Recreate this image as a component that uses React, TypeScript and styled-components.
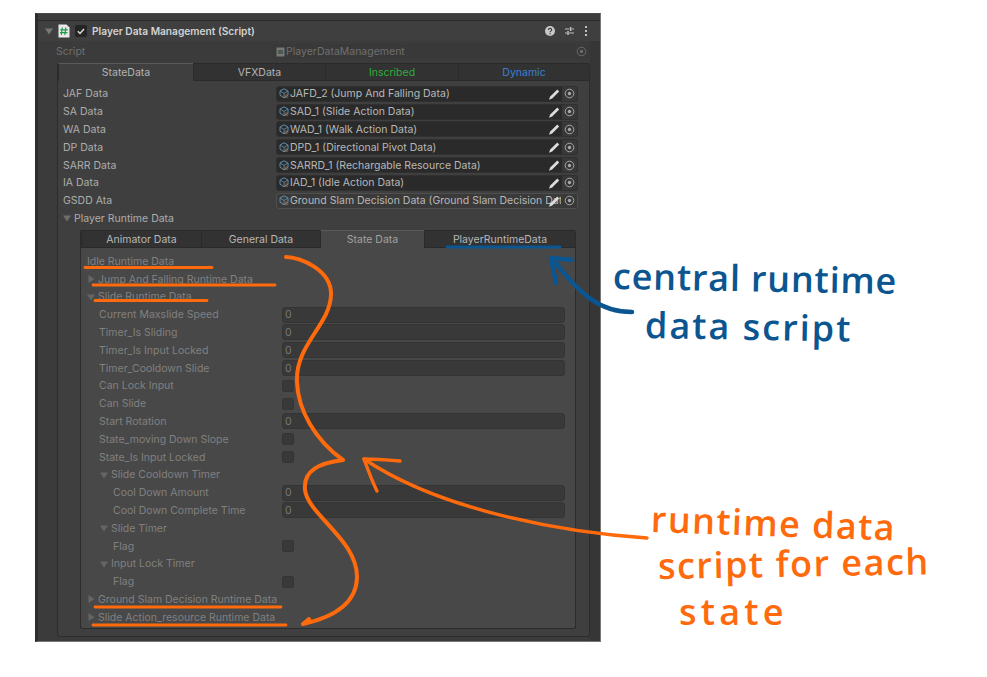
import React from "react";
import styled, { createGlobalStyle } from "styled-components";

const Global = createGlobalStyle`
  html, body { margin: 0; padding: 0; background: #fff; }
  body { font-family: Inter, "Liberation Sans", sans-serif; font-size: 10.5px; }
  #root { width: 987px; height: 677px; position: relative; overflow: hidden; }
`;

const Panel = styled.div`
  box-sizing: border-box;
  width: 566px;
  height: 629px;
  margin: 13px 0 0 35px;
  background: #3e3e3e;
  border-left: 3px solid #2d2d2d;
  border-top: 1px solid #4a4a4a;
  border-right: 1px solid #777;
  border-bottom: 1px solid #777;
  display: flex;
  flex-direction: column;
`;

const HeaderBar = styled.div`
  height: 20px;
  margin-top: 6px;
  border-top: 1px solid #2b2b2b;
  display: flex;
  align-items: center;
  padding: 0 12px 0 7px;
  gap: 5px;
  background: #3f3f3f;
`;

const HeaderTitle = styled.span`
  color: #d2d2d2;
  font-weight: 600;
  font-size: 10.2px;
  flex: 1;
`;

const HeaderIcons = styled.div`
  display: flex;
  align-items: center;
  gap: 10px;
`;

const Body = styled.div`
  flex: 1;
  display: flex;
  background: #3b3b3b;
  padding: 2px 0 4px 19px;
  min-height: 0;
  box-shadow: inset -10px 0 0 #363636;
`;

const BodyInner = styled.div`
  width: 533px;
  display: flex;
  flex-direction: column;
`;

const ScriptRow = styled.div`
  height: 17px;
  margin-bottom: 3px;
  display: flex;
  align-items: center;
  color: #6f6f6f;
`;

const ScriptLabel = styled.span`
  width: 215px;
  margin-left: -1px;
  padding-right: 1px;
`;

const ScriptField = styled.div`
  width: 318px;
  height: 15px;
  box-sizing: border-box;
  background: #393939;
  border-radius: 3px;
  display: flex;
  align-items: center;
  padding: 0 3px 0 4px;
  gap: 1px;
  color: #6f6f6f;
`;

const Grow = styled.span`
  flex: 1;
  white-space: nowrap;
  overflow: hidden;
`;

const TabGroup = styled.div<{ $inner?: boolean }>`
  flex: 1;
  min-height: 0;
  box-sizing: border-box;
  background: ${(p) => (p.$inner ? "#484848" : "#3f3f3f")};
  border: 1px solid #2c2c2c;
  border-top: none;
  border-radius: 3px;
  display: flex;
  flex-direction: column;
`;

const TabBar = styled.div<{ $cols: string }>`
  display: grid;
  grid-template-columns: ${(p) => p.$cols};
  height: 18px;
  flex: none;
`;

const Tab = styled.div<{ $active?: boolean; $bg: string; $color?: string }>`
  background: ${(p) => (p.$active ? p.$bg : "#323232")};
  color: ${(p) => p.$color ?? "#b4b4b4"};
  border-top: 1px solid ${(p) => (p.$active ? "#5a5a5a" : "#2a2a2a")};
  border-left: 1px solid #2a2a2a;
  border-bottom: ${(p) => (p.$active ? "none" : "1px solid #2a2a2a")};
  display: flex;
  align-items: center;
  justify-content: center;
  box-sizing: border-box;
`;

const Rows = styled.div<{ $pad: string }>`
  padding: ${(p) => p.$pad};
  display: flex;
  flex-direction: column;
  flex: 1;
  min-height: 0;
`;

const Row = styled.div<{ $indent?: number; $dim?: boolean }>`
  height: 17.8px;
  flex: none;
  display: flex;
  align-items: center;
  padding-left: ${(p) => p.$indent ?? 0}px;
  color: ${(p) => (p.$dim ? "#808080" : "#adadad")};
  white-space: nowrap;
`;

const Label = styled.span<{ $w: number }>`
  width: ${(p) => p.$w}px;
  flex: none;
`;

const ObjectField = styled.div<{ $hover?: boolean }>`
  width: 302px;
  height: 16px;
  box-sizing: border-box;
  background: ${(p) => (p.$hover ? "#3a3a3a" : "#2a2a2a")};
  border: 1px solid ${(p) => (p.$hover ? "#4f4f4f" : "#303030")};
  border-radius: 3px;
  display: flex;
  align-items: center;
  color: #b8b8b8;
  padding-left: 2px;
  gap: 1px;
  position: relative;
`;

const Picker = styled.span`
  width: 15px;
  height: 14px;
  flex: none;
  background: #383838;
  display: flex;
  align-items: center;
  justify-content: center;
  border-radius: 0 2px 2px 0;
`;

/* the pencil sits on top of long object names, as in the inspector */
const PencilSlot = styled.span`
  position: absolute;
  right: 17px;
  top: 2px;
  width: 12px;
  height: 11px;
  display: flex;
`;

const Foldout = styled.span`
  display: inline-flex;
  align-items: center;
  gap: 3px;
`;

const InnerWrap = styled.div`
  flex: 1;
  min-height: 0;
  display: flex;
  flex-direction: column;
  margin: 3px 3px 0 17px;
`;

const NumberField = styled.div`
  width: 284px;
  height: 16px;
  box-sizing: border-box;
  background: #393939;
  border: 1px solid #343434;
  border-radius: 3px;
  padding-left: 2px;
  display: flex;
  align-items: center;
  color: #777;
`;

const CheckBox = styled.div`
  width: 12px;
  height: 12px;
  background: #393939;
  border: 1px solid #343434;
  border-radius: 2px;
  box-sizing: border-box;
`;

const Overlay = styled.svg`
  position: absolute;
  left: 0;
  top: 0;
  pointer-events: none;
`;

const Hand = styled.span<{ $x: number; $y: number; $rot: number; $color: string; $ls: number }>`
  position: absolute;
  left: ${(p) => p.$x}px;
  top: ${(p) => p.$y}px;
  font-family: "Open Sans", sans-serif;
  font-weight: 600;
  font-size: 36px;
  line-height: 1;
  letter-spacing: ${(p) => p.$ls}px;
  color: ${(p) => p.$color};
  transform: rotate(${(p) => p.$rot}deg);
  transform-origin: left center;
  white-space: nowrap;
`;

const Caret = ({ open, color = "#6e6e6e" }: { open?: boolean; color?: string }) => (
  <svg width="8" height="8" viewBox="0 0 8 8" style={{ flex: "none" }}>
    <path d={open ? "M0 1.5h8L4 7.5z" : "M1.5 0v8L7.5 4z"} fill={color} />
  </svg>
);

const Target = ({ color = "#a8a8a8" }: { color?: string }) => (
  <svg width="11" height="11" viewBox="0 0 11 11">
    <circle cx="5.5" cy="5.5" r="4.3" fill="none" stroke={color} strokeWidth="1" />
    <circle cx="5.5" cy="5.5" r="1.7" fill={color} />
  </svg>
);

const Pencil = () => (
  <svg width="12" height="11" viewBox="0 0 12 11">
    <path d="M1 10.700l1.200-3.200L9.300.6l1.900 1.900-7 7z" fill="#dcdcdc" />
  </svg>
);

const Cube = () => (
  <svg width="10" height="11" viewBox="0 0 10 11" style={{ flex: "none" }}>
    <path d="M5 .8l4 2.200v4.200L5 9.800 1 7.200V3z" fill="none" stroke="#5f8fa8" strokeWidth="1" />
    <path d="M1 3l4 2.400L9 3M5 5.400v4.400" fill="none" stroke="#5f8fa8" strokeWidth=".8" />
    <circle cx="7.400" cy="8.200" r="1.500" fill="none" stroke="#b8663a" strokeWidth=".8" />
  </svg>
);

const HashIcon = () => (
  <svg width="12" height="14" viewBox="0 0 12 14" style={{ flex: "none" }}>
    <path d="M0.500 0.500h8l3 3v10h-11z" fill="#e9e9e9" />
    <path d="M4.300 3.500l-1 7.500M7.800 3.500l-1 7.500M2.300 5.800h7.500M2 8.700h7.500" stroke="#1f9a4a" strokeWidth="1.200" fill="none" />
  </svg>
);

const EnabledCheck = () => (
  <svg width="12" height="12" viewBox="0 0 12 12" style={{ flex: "none" }}>
    <rect width="12" height="12" rx="2" fill="#242424" />
    <path d="M2.800 6.300l2.200 2.200 4-4.500" stroke="#dcdcdc" strokeWidth="1.500" fill="none" />
  </svg>
);

const HelpIcon = () => (
  <svg width="10" height="10" viewBox="0 0 10 10">
    <circle cx="5" cy="5" r="5" fill="#c8c8c8" />
    <path d="M3.400 3.900c0-2 3.300-2 3.300 0 0 1.200-1.700 1.200-1.700 2.300" stroke="#3f3f3f" strokeWidth="1.100" fill="none" />
    <circle cx="5" cy="7.800" r=".7" fill="#3f3f3f" />
  </svg>
);

const SlidersIcon = () => (
  <svg width="9" height="10" viewBox="0 0 9 10">
    <path d="M0 3h4.500M7 3h2M0 7h2M4 7h5" stroke="#c0c0c0" strokeWidth="1.200" />
    <path d="M5.700 1v4M3 5v4" stroke="#c0c0c0" strokeWidth="1.500" />
  </svg>
);

const KebabIcon = () => (
  <svg width="4" height="10" viewBox="0 0 4 10">
    <rect x="1" y="0" width="2" height="2" fill="#c0c0c0" />
    <rect x="1" y="4" width="2" height="2" fill="#c0c0c0" />
    <rect x="1" y="8" width="2" height="2" fill="#c0c0c0" />
  </svg>
);

const ScriptGlyph = () => (
  <svg width="9" height="10" viewBox="0 0 9 10" style={{ flex: "none" }}>
    <rect x=".5" y=".5" width="8" height="9" fill="#777" />
    <rect x="2" y="3" width="5" height="4" fill="#4c5a4e" />
  </svg>
);

const stateRows: [string, string, boolean?][] = [
  ["JAF Data", "JAFD_2 (Jump And Falling Data)"],
  ["SA Data", "SAD_1 (Slide Action Data)"],
  ["WA Data", "WAD_1 (Walk Action Data)"],
  ["DP Data", "DPD_1 (Directional Pivot Data)"],
  ["SARR Data", "SARRD_1 (Rechargable Resource Data)"],
  ["IA Data", "IAD_1 (Idle Action Data)"],
  ["GSDD Ata", "Ground Slam Decision Data (Ground Slam Decision Dat", true],
];

type Runtime =
  | { kind: "head"; text: string }
  | { kind: "fold"; text: string; open?: boolean; indent: number }
  | { kind: "num"; text: string; indent: number }
  | { kind: "check"; text: string; indent: number };

const runtimeRows: Runtime[] = [
  { kind: "head", text: "Idle Runtime Data" },
  { kind: "fold", text: "Jump And Falling Runtime Data", indent: 0 },
  { kind: "fold", text: "Slide Runtime Data", open: true, indent: 0 },
  { kind: "num", text: "Current Maxslide Speed", indent: 12 },
  { kind: "num", text: "Timer_Is Sliding", indent: 12 },
  { kind: "num", text: "Timer_Is Input Locked", indent: 12 },
  { kind: "num", text: "Timer_Cooldown Slide", indent: 12 },
  { kind: "check", text: "Can Lock Input", indent: 12 },
  { kind: "check", text: "Can Slide", indent: 12 },
  { kind: "num", text: "Start Rotation", indent: 12 },
  { kind: "check", text: "State_moving Down Slope", indent: 12 },
  { kind: "check", text: "State_Is Input Locked", indent: 12 },
  { kind: "fold", text: "Slide Cooldown Timer", open: true, indent: 13 },
  { kind: "num", text: "Cool Down Amount", indent: 26 },
  { kind: "num", text: "Cool Down Complete Time", indent: 26 },
  { kind: "fold", text: "Slide Timer", open: true, indent: 13 },
  { kind: "check", text: "Flag", indent: 26 },
  { kind: "fold", text: "Input Lock Timer", open: true, indent: 13 },
  { kind: "check", text: "Flag", indent: 26 },
  { kind: "fold", text: "Ground Slam Decision Runtime Data", indent: 0 },
  { kind: "fold", text: "Slide Action_resource Runtime Data", indent: 0 },
];

const RuntimeRow = ({ row }: { row: Runtime }) => {
  if (row.kind === "head") return <Row $dim>{row.text}</Row>;
  if (row.kind === "fold")
    return (
      <Row $dim $indent={row.indent}>
        <Foldout>
          <Caret open={row.open} color="#656565" />
          {row.text}
        </Foldout>
      </Row>
    );
  return (
    <Row $dim $indent={row.indent}>
      <Label $w={195 - row.indent}>{row.text}</Label>
      {row.kind === "num" ? <NumberField>0</NumberField> : <CheckBox />}
    </Row>
  );
};

export default function App() {
  return (
    <>
      <Global />
      <Panel>
        <HeaderBar>
          <Caret open color="#777" />
          <HashIcon />
          <EnabledCheck />
          <HeaderTitle>Player Data Management (Script)</HeaderTitle>
          <HeaderIcons>
            <HelpIcon />
            <SlidersIcon />
            <KebabIcon />
          </HeaderIcons>
        </HeaderBar>
        <Body>
          <BodyInner>
            <ScriptRow>
              <ScriptLabel>Script</ScriptLabel>
              <ScriptField>
                <ScriptGlyph />
                <Grow>PlayerDataManagement</Grow>
                <Target color="#6a6a6a" />
              </ScriptField>
            </ScriptRow>
            <TabGroup>
              <TabBar $cols="135px 132px 133px 1fr">
                <Tab $active $bg="#3f3f3f">StateData</Tab>
                <Tab $bg="#3f3f3f">VFXData</Tab>
                <Tab $bg="#3f3f3f" $color="#2fae3a">Inscribed</Tab>
                <Tab $bg="#3f3f3f" $color="#3a80d2">Dynamic</Tab>
              </TabBar>
              <Rows $pad="4px 10px 7px 5px">
                {stateRows.map(([label, value, hover]) => (
                  <Row key={label}>
                    <Label $w={213}>{label}</Label>
                    <ObjectField $hover={hover}>
                      <Cube />
                      <Grow>{value}</Grow>
                      <PencilSlot>
                        <Pencil />
                      </PencilSlot>
                      <Picker>
                        <Target />
                      </Picker>
                    </ObjectField>
                  </Row>
                ))}
                <Row>
                  <Foldout>
                    <Caret open />
                    Player Runtime Data
                  </Foldout>
                </Row>
                <InnerWrap>
                  <TabGroup $inner>
                    <TabBar $cols="120px 119px 104px 1fr">
                      <Tab $color="#b8b8b8" $bg="#484848">Animator Data</Tab>
                      <Tab $color="#b8b8b8" $bg="#484848">General Data</Tab>
                      <Tab $active $bg="#484848" $color="#a2a2a2">State Data</Tab>
                      <Tab $bg="#484848" $color="#b8b8b8">PlayerRuntimeData</Tab>
                    </TabBar>
                    <Rows $pad="4px 10px 0 6px">
                      {runtimeRows.map((row, i) => (
                        <RuntimeRow key={i} row={row} />
                      ))}
                    </Rows>
                  </TabGroup>
                </InnerWrap>
              </Rows>
            </TabGroup>
          </BodyInner>
        </Body>
      </Panel>

      <Overlay width="987" height="677" viewBox="0 0 987 677" fill="none" strokeLinecap="round" strokeLinejoin="round">
        <g stroke="#ff6a0d" strokeWidth="2.800">
          <path d="M85 267.500 H212" />
          <path d="M93 285 H275" />
          <path d="M95 300.500 H207" />
          <path d="M95 607 H281" />
          <path d="M93 625 H286" />
          <path d="M286 257 C300 257 332 270 331 295 C330 325 295 345 297 382 C298 410 315 440 343 460 C320 463 303 470 305 490 C308 515 358 540 357 578 C356 605 330 618 303 624 L309 619" strokeWidth="4" />
          <path d="M647 538 C560 532 440 510 364 459" strokeWidth="3.400" />
          <path d="M400 461 C388 460 375 459 364 459 C368 470 372 481 377 491" strokeWidth="3.400" />
        </g>
        <g stroke="#0b5590">
          <path d="M447 247 H560" strokeWidth="3" />
          <path d="M632 312 C600 312 580 295 552 258" strokeWidth="4.500" />
          <path d="M572 260 L551 258 L556 283" strokeWidth="4.500" />
        </g>
      </Overlay>

      <Hand $x={613} $y={258} $rot={1} $color="#0b5590" $ls={0.8}>central runtime</Hand>
      <Hand $x={645} $y={307} $rot={1} $color="#0b5590" $ls={2}>data script</Hand>
      <Hand $x={651} $y={501} $rot={2} $color="#ff6a0d" $ls={1.4}>runtime data</Hand>
      <Hand $x={658} $y={548} $rot={-1} $color="#ff6a0d" $ls={1.5}>script for each</Hand>
      <Hand $x={679} $y={594} $rot={0} $color="#ff6a0d" $ls={4.2}>state</Hand>
    </>
  );
}
